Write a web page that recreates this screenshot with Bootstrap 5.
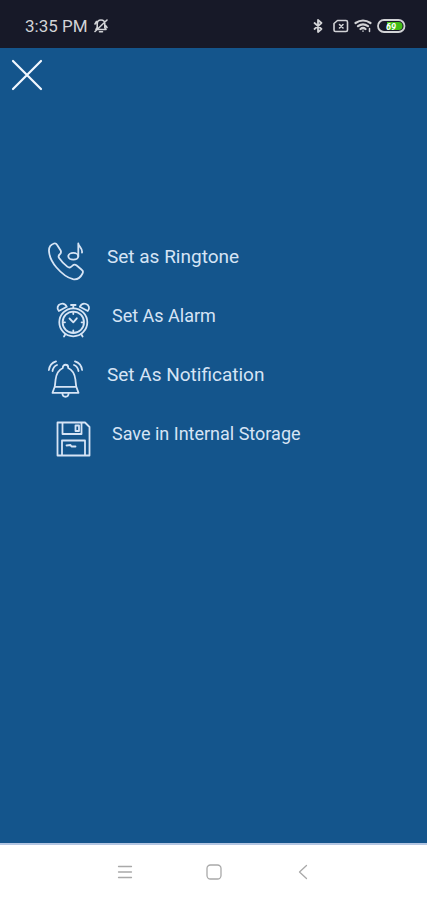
<!DOCTYPE html>
<html lang="en">
<head>
<meta charset="utf-8">
<meta name="viewport" content="width=device-width, initial-scale=1">
<title>Set sound as</title>
<link href="https://cdn.jsdelivr.net/npm/bootstrap@5.3.0/dist/css/bootstrap.min.css" rel="stylesheet">
<style>
  body { font-family: Roboto, "Liberation Sans", sans-serif; background: #14558c; color: #d6e4f5; }
  svg { display: block; flex: none; fill: none; stroke: currentColor; stroke-linecap: round; stroke-linejoin: round; }
  .status-bar { height: 48px; padding: 4px 21px 0 25px; background: #171928; color: #d2d3d6; }
  .clock { font-size: 17px; line-height: 20px; }
  .status-start { gap: 6px; }
  .status-end { gap: 5px; }
  .close-btn { margin: 11px; color: #f2f8ff; }
  .sound-menu { margin-top: 140px; }
  .action { height: 59px; color: inherit; font-size: 19px; line-height: 24px; padding: 0 48px; gap: 23px; }
  .action-inset { font-size: 18px; padding: 0 55px; gap: 21px; }
  .action svg { stroke-width: 1.8; }
  .nav-keys { height: 57px; gap: 45px; padding-bottom: 2px; border-top: 2px solid #b4c6e2; color: #a9a9a9; }
  .nav-keys .btn { width: 44px; height: 44px; color: inherit; }
</style>
</head>
<body class="d-flex flex-column min-vh-100">
<header class="status-bar d-flex align-items-center justify-content-between">
  <div class="status-start d-flex align-items-center">
    <span class="clock">3:35 PM</span>
    <svg width="14" height="16" viewBox="0 0 14 16" stroke-width="1.6" role="img" aria-label="Silent mode">
      <path d="M2 11.500h10L10.800 9.500V6c0-2.200-1.500-4-3.800-4S3.200 3.800 3.200 6v3.500zM5.500 13.700h3M1 13.500L13 2M1 6l1.500-2.500M13 9.500l-1.500-2"/>
    </svg>
  </div>
  <div class="status-end d-flex align-items-center">
    <svg class="me-1" width="12" height="16" viewBox="0 0 12 16" stroke-width="1.8" role="img" aria-label="Bluetooth">
      <path d="M2.500 5l7 6L6 14V2l3.500 3-7 6"/>
    </svg>
    <svg width="16" height="16" viewBox="0 0 16 16" stroke-width="1.6" role="img" aria-label="No SIM card">
      <path d="M4.500 2.500H13q1.500 0 1.500 1.500v8q0 1.500-1.500 1.500H2.500q-1.500 0-1.500-1.500V5.500zM6.500 6.500l3.500 3.500M10 6.500l-3.500 3.500"/>
    </svg>
    <svg width="18" height="16" viewBox="0 0 18 16" stroke-width="2.200" role="img" aria-label="Wi-Fi">
      <path d="M1.500 5q7.500-5 15 0M4 8.200q5-3.600 10 0M6.500 11q2.500-2 5 0"/><path d="M9 13v.2M15.500 10.500v3" stroke-width="1.500"/>
    </svg>
    <svg width="29" height="16" viewBox="0 0 29 16" role="img" aria-label="Battery 69 percent">
      <rect x="1" y="2" width="26.500" height="12" rx="6" fill="#171928" stroke-width="1.800"/>
      <path d="M10 4h11.500a4 4 0 0 1 0 8H10z" fill="#43bd16" stroke="none"/>
      <text x="9" y="11.500" font-size="9" font-weight="700" font-style="italic" fill="#fff" stroke="none">69</text>
    </svg>
  </div>
</header>
<main class="flex-grow-1">
  <button type="button" class="close-btn btn p-0 border-0 d-block" aria-label="Close">
    <svg width="32" height="32" viewBox="0 0 32 32" stroke-width="2.200"><path d="M2 2l28 28M30 2L2 30"/></svg>
  </button>
  <div class="sound-menu d-flex flex-column">
    <button type="button" class="action btn border-0 rounded-0 d-flex align-items-center text-start w-100">
      <svg width="36" height="40" viewBox="0 0 36 40" aria-hidden="true">
        <path d="M6 2.500C3 3.500.800 6.500 1 10c.300 5.500 3.200 11.500 7.500 16.500S18 36.500 25 38.200c4 .8 7.500-1.700 9.500-5.700.8-1.500.5-2.800-.8-3.800l-5-4.200c-1.400-1.200-3-1.100-4.200.1l-1.500 1.300c-1.200 1-2.500.7-3.700-.3-3.300-2.600-6-5.500-8.200-8.700-.9-1.300-.6-2.400.5-3.400 1.600-1.400 1.800-2.700.9-4.200L9 3.700C8.300 2.500 7.300 2.100 6 2.500z"/>
        <ellipse cx="25.300" cy="15.300" rx="5" ry="3.400"/><path d="M30.300 15.300V2.500c.3 3 4.500 4.700 3.700 9.200"/>
      </svg>
      <span class="pb-2">Set as Ringtone</span>
    </button>
    <button type="button" class="action action-inset btn border-0 rounded-0 d-flex align-items-center text-start w-100">
      <svg width="36" height="40" viewBox="0 0 36 40" aria-hidden="true">
        <circle cx="18.300" cy="22.300" r="14"/><circle cx="18.300" cy="22.300" r="10.700"/>
        <path d="M3.800 11C1.500 8.500 2.500 5 5.500 4c2.500-1 5 .2 6.300 2.800zM32.800 11c2.300-2.500 1.300-6-1.700-7-2.500-1-5 .2-6.300 2.800z"/>
        <path d="M14.500 18.500l3.800 3.800 3.500-4M18.300 8V5.500M16 5h4.600M10.500 34l-1.500 2.500M26.100 34l1.500 2.500M18.300 12.500v1.500M18.300 30.500v1.500M8.600 22.300H10M26.600 22.300H28"/>
      </svg>
      <span class="pb-2">Set As Alarm</span>
    </button>
    <button type="button" class="action btn border-0 rounded-0 d-flex align-items-center text-start w-100">
      <svg width="36" height="40" viewBox="0 0 36 40" aria-hidden="true">
        <path d="M14.800 9V8.300c0-3.400 5.400-3.400 5.400 0V9c4.200 2 6.600 6.500 7.200 11.500.4 3.300.5 5.500.9 7.300H6.700c.4-1.800.5-4 .9-7.300C8.200 15.500 10.600 11 14.800 9zM6.700 27.800l-2.200 6h26l-2.200-6M14.300 34c.3 5 6.100 5 6.400 0"/>
        <path d="M.900 11C1.500 6.500 4 3.500 8 2.300M4.500 12C5 9 6.500 7 9 6M34.100 11C33.500 6.500 31 3.500 27 2.300M30.500 12C30 9 28.500 7 26 6"/>
      </svg>
      <span class="pb-2">Set As Notification</span>
    </button>
    <button type="button" class="action action-inset btn border-0 rounded-0 d-flex align-items-center text-start w-100">
      <svg width="36" height="40" viewBox="0 0 36 40" aria-hidden="true">
        <path d="M2.500 4.500h27.500l4.500 4.500v28.500H2.500zM7.500 4.500V16h19V4.500M7 37.500V22.500h23v15"/>
        <rect x="20.500" y="7.500" width="3.500" height="5.500"/><path d="M11.500 27.500l4-.5 1 1.500h4"/>
      </svg>
      <span class="pb-2">Save in Internal Storage</span>
    </button>
  </div>
</main>
<nav class="nav-keys bg-white d-flex align-items-center justify-content-center" aria-label="System navigation">
  <button type="button" class="btn p-0 border-0 d-flex align-items-center justify-content-center" aria-label="Recent apps">
    <svg width="16" height="16" viewBox="0 0 16 16" stroke-width="1.300"><path d="M1.500 2.500h13M1.500 8h13M1.500 13.500h13"/></svg>
  </button>
  <button type="button" class="btn p-0 border-0 d-flex align-items-center justify-content-center" aria-label="Home">
    <svg width="16" height="16" viewBox="0 0 16 16" stroke-width="1.300"><rect x="1" y="1" width="14" height="14" rx="3.500"/></svg>
  </button>
  <button type="button" class="btn p-0 border-0 d-flex align-items-center justify-content-center" aria-label="Back">
    <svg width="16" height="16" viewBox="0 0 16 16" stroke-width="1.300"><path d="M11.500 1.500L4.500 8l7 6.500"/></svg>
  </button>
</nav>
<script src="https://cdn.jsdelivr.net/npm/bootstrap@5.3.0/dist/js/bootstrap.bundle.min.js"></script>
</body>
</html>
